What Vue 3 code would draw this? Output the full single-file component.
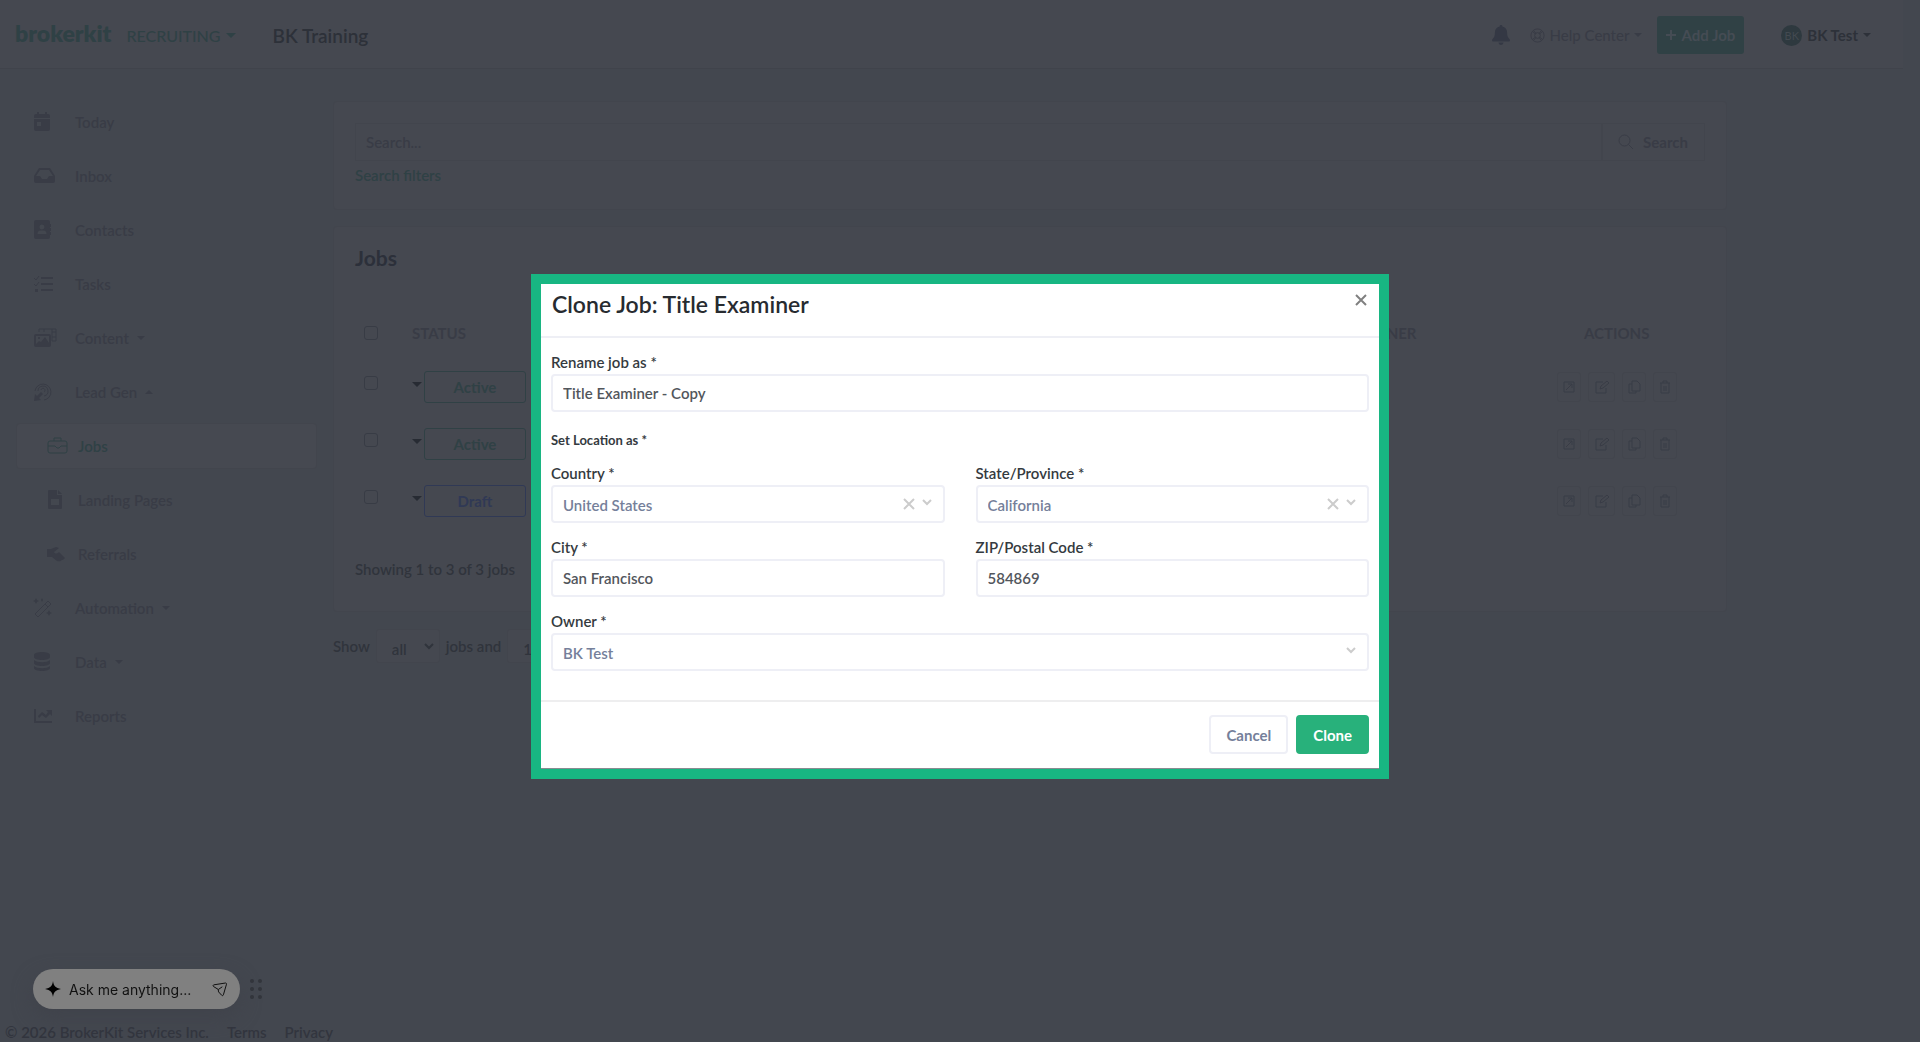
<template>
  <div class="page">
    <header class="topbar">
      <a class="brand" href="#">brokerkit</a>
      <button class="product" type="button">RECRUITING <i class="caret big"></i></button>
      <span class="workspace">BK Training</span>
      <div class="top-actions">
        <button class="bell" type="button" aria-label="Notifications">
          <svg width="18" height="20" viewBox="0 0 18 20">
            <path d="M9 0a1.300 1.300 0 0 0-1.300 1.500C4.800 2.100 2.900 4.400 2.900 7.500c0 3.800-1 5.200-2.500 6.800-.8.900-.2 2.200.9 2.200h15.400c1.100 0 1.700-1.300.9-2.200-1.500-1.600-2.500-3-2.500-6.800 0-3.100-1.900-5.400-4.800-6A1.300 1.300 0 0 0 9 0zM6.500 17.500a2.500 2.500 0 0 0 5 0z" />
          </svg>
        </button>
        <button class="help" type="button">
          <svg width="15" height="15" viewBox="0 0 15 15">
            <circle cx="7.500" cy="7.500" r="6.600" />
            <circle cx="7.500" cy="7.500" r="2.900" />
            <path d="M2.500 3.500l3 2.500M3.500 2.500l2.500 3M12.500 3.500l-3 2.500M11.500 2.500L9 5.500M2.500 11.500l3-2.500M3.500 12.500l2.500-3M12.500 11.500l-3-2.500M11.500 12.500L9 9.500" />
          </svg>
          Help Center <i class="caret"></i>
        </button>
        <button class="add-job" type="button">
          <svg width="12" height="12" viewBox="0 0 12 12"><path d="M6 1v10M1 6h10" /></svg>
          Add Job
        </button>
        <button class="account" type="button">
          <span class="avatar">BK</span>
          BK Test <i class="caret"></i>
        </button>
      </div>
    </header>

    <div class="body">
      <nav class="sidebar">
        <a
          v-for="item in navItems"
          :key="item.label"
          href="#"
          class="nav-item"
          :class="{ sub: item.sub, active: item.active }"
        >
          <svg class="nav-icon" width="24" height="20" viewBox="0 0 24 20">
            <path v-if="item.fill" class="fill" fill-rule="evenodd" :d="item.fill" />
            <path v-if="item.line" class="line" :d="item.line" />
          </svg>
          <span>{{ item.label }}</span>
          <i v-if="item.caret" class="caret" :class="item.caret"></i>
        </a>
      </nav>

      <main class="content">
        <section class="card search-card">
          <div class="search-row">
            <input v-model="search" type="text" placeholder="Search..." aria-label="Search jobs">
            <button type="button">
              <svg width="16" height="16" viewBox="0 0 16 16"><circle cx="6.500" cy="6.500" r="5.500" /><path d="M10.500 10.500L15 15" /></svg>
              Search
            </button>
          </div>
          <a class="filters" href="#">Search filters</a>
        </section>

        <section class="card jobs-card">
          <h2>Jobs</h2>
          <table>
            <thead>
              <tr>
                <th class="check"><input type="checkbox" aria-label="Select all jobs"></th>
                <th class="status">Status</th>
                <th class="owner">Owner</th>
                <th class="actions">Actions</th>
              </tr>
            </thead>
            <tbody>
              <tr v-for="job in jobs" :key="job.id">
                <td class="check"><input type="checkbox" :aria-label="'Select job ' + job.id"></td>
                <td class="status">
                  <button class="status-btn" :class="job.status.toLowerCase()" type="button">
                    <i class="caret"></i><span>{{ job.status }}</span>
                  </button>
                </td>
                <td class="owner"></td>
                <td class="actions">
                  <div class="action-row">
                    <button v-for="a in actions" :key="a.name" type="button" :aria-label="a.name" :class="a.name">
                      <svg width="14" height="14" viewBox="0 0 14 14"><path :d="a.d" /></svg>
                    </button>
                  </div>
                </td>
              </tr>
            </tbody>
          </table>
          <p class="showing">Showing 1 to 3 of 3 jobs</p>
        </section>

        <div class="pager">
          <label for="show-jobs">Show</label>
          <span class="mini-select">
            <select id="show-jobs"><option>all</option></select>
            <svg width="10" height="7" viewBox="0 0 10 7"><path d="M1 1l4 4 4-4" /></svg>
          </span>
          <label for="per-page">jobs and</label>
          <span class="mini-select">
            <select id="per-page"><option>10</option></select>
          </span>
        </div>
      </main>
    </div>

    <footer class="legal">
      <span>© 2026 BrokerKit Services Inc.</span>
      <a href="#">Terms</a>
      <a href="#">Privacy</a>
    </footer>

    <div class="assistant">
      <div class="ask">
        <svg width="16" height="16" viewBox="0 0 16 16" class="spark"><path d="M8 0c.7 4.800 2.500 7 8 8-5.500 1-7.300 3.200-8 8-.7-4.800-2.500-7-8-8 5.500-1 7.300-3.200 8-8z" /></svg>
        <input type="text" placeholder="Ask me anything..." aria-label="Ask me anything">
        <button type="button" aria-label="Send">
          <svg width="16" height="15" viewBox="0 0 16 15"><path d="M2 2.800L13.500 1c.7-.1 1.200.5 1 1.200l-3.100 10.600c-.2.900-1.200 1.100-1.800.4L6.600 9.900 6.200 7.400 1.500 4.500c-.8-.6-.5-1.500.5-1.700zM6.300 7.500l4-2.700" /></svg>
        </button>
      </div>
      <svg class="grip" width="12" height="20" viewBox="0 0 12 20">
        <circle v-for="n in 6" :key="n" :cx="n % 2 ? 2 : 10" :cy="2 + 8 * Math.floor((n - 1) / 2)" r="2" />
      </svg>
    </div>

    <div class="modal-layer">
      <form class="modal" role="dialog" aria-labelledby="clone-title" @submit.prevent>
        <div class="modal-head">
          <h1 id="clone-title">Clone Job: Title Examiner</h1>
          <button type="button" class="close" aria-label="Close">
            <svg width="12" height="12" viewBox="0 0 12 12"><path d="M1 1l10 10M11 1L1 11" /></svg>
          </button>
        </div>

        <div class="modal-body">
          <div class="field wide">
            <label for="job-name">Rename job as *</label>
            <input id="job-name" v-model="form.name" type="text">
          </div>
          <h3>Set Location as *</h3>
          <div v-for="f in fields" :key="f.key" class="field" :class="{ wide: f.wide }">
            <label :for="f.key">{{ f.label }}</label>
            <div v-if="f.select" class="picker">
              <select :id="f.key" v-model="form[f.key]"><option>{{ form[f.key] }}</option></select>
              <button v-if="f.clearable" type="button" class="clear" :aria-label="'Clear ' + f.key">
                <svg width="12" height="12" viewBox="0 0 12 12"><path d="M1 1l10 10M11 1L1 11" /></svg>
              </button>
              <svg class="chevron" width="10" height="7" viewBox="0 0 10 7"><path d="M1 1l4 4 4-4" /></svg>
            </div>
            <input v-else :id="f.key" v-model="form[f.key]" type="text">
          </div>
        </div>

        <div class="modal-foot">
          <button type="button" class="btn">Cancel</button>
          <button type="submit" class="btn primary">Clone</button>
        </div>
      </form>
    </div>
  </div>
</template>

<script setup>
import { reactive, ref } from 'vue'

const search = ref('')

const form = reactive({
  name: 'Title Examiner - Copy',
  country: 'United States',
  state: 'California',
  city: 'San Francisco',
  zip: '584869',
  owner: 'BK Test'
})

const fields = [
  { key: 'country', label: 'Country *', select: true, clearable: true },
  { key: 'state', label: 'State/Province *', select: true, clearable: true },
  { key: 'city', label: 'City *' },
  { key: 'zip', label: 'ZIP/Postal Code *' },
  { key: 'owner', label: 'Owner *', select: true, wide: true }
]

const navItems = [
  {
    label: 'Today',
    fill: 'M4 0h2v2h6V0h2v2h1a2 2 0 0 1 2 2v2H1V4a2 2 0 0 1 2-2h1zM1 7h16v10a2 2 0 0 1-2 2H3a2 2 0 0 1-2-2zM4 10v4h4v-4z'
  },
  {
    label: 'Inbox',
    fill: 'M6 2h11l5 8v5a2 2 0 0 1-2 2H3a2 2 0 0 1-2-2v-5zM7 4l-4 6h4l2 3h5l2-3h4l-4-6z'
  },
  {
    label: 'Contacts',
    fill: 'M3 0h12a2 2 0 0 1 2 2v2h1v3h-1v1h1v3h-1v1h1v3h-1v2a2 2 0 0 1-2 2H3a2 2 0 0 1-2-2V2a2 2 0 0 1 2-2zM9 4.500a2.500 2.500 0 1 0 0 5 2.500 2.500 0 0 0 0-5zM7.500 10.500C5.500 10.500 4.500 12 4.500 14h9c0-2-1-3.500-3-3.500z'
  },
  {
    label: 'Tasks',
    fill: 'M8 3h12v2H8zM8 9h12v2H8zM8 15h12v2H8zM2 15h3v3H2z',
    line: 'M1 4l2 2 3-4M1 10l2 2 3-4'
  },
  {
    label: 'Content',
    caret: 'down',
    fill: 'M3 6h13a2 2 0 0 1 2 2v9a2 2 0 0 1-2 2H3a2 2 0 0 1-2-2V8a2 2 0 0 1 2-2zM3 8v8l3-3 2 1 4-5 4 6V8zM5 9h2v2H5z',
    line: 'M6 4V1h17v12h-4M11 1v3M19 4h4M19 9h4M19 1v12'
  },
  {
    label: 'Lead Gen',
    caret: 'up',
    fill: 'M1 19l1-7 2 2 4-4 2 2-4 4 2 2z',
    line: 'M2 9a8 8 0 1 1 9 9M5 9a5 5 0 1 1 6 5M8 8a2 2 0 1 1 3 2'
  },
  {
    label: 'Jobs',
    sub: true,
    active: true,
    line: 'M3 5h15a2 2 0 0 1 2 2v8a2 2 0 0 1-2 2H3a2 2 0 0 1-2-2V7a2 2 0 0 1 2-2zM7 5V2h7v3M1 10h7l2 2h2l2-2h6'
  },
  {
    label: 'Landing Pages',
    sub: true,
    fill: 'M2 0h8v5h5v13a1 1 0 0 1-1 1H2a1 1 0 0 1-1-1V1a1 1 0 0 1 1-1zM11 0l4 4h-4zM4 9v6h8V9z'
  },
  {
    label: 'Referrals',
    sub: true,
    fill: 'M0 5h4l5-2 3 1-5 4c1 2 3 2 5 0l6 6c-1 1-2 2-3 2-2 2-4 1-5 1l-5-4H0z'
  },
  {
    label: 'Automation',
    caret: 'down',
    fill: 'M3 0l1 2 2 1-2 1-1 2-1-2-2-1 2-1zM16 12l1 2 2 1-2 1-1 2-1-2-2-1 2-1zM9 0l1 2-1 2-1-2z',
    line: 'M2 16L15 3l3 3L5 19zM12 6l3 3'
  },
  {
    label: 'Data',
    caret: 'down',
    fill: 'M1 3c0-4 16-4 16 0v2c0 4-16 4-16 0zM1 8c3 3 13 3 16 0v3c0 4-16 4-16 0zM1 14c3 3 13 3 16 0v2c0 4-16 4-16 0z'
  },
  {
    label: 'Reports',
    fill: 'M1 3h2v12h16v2H1zM13 4h6v6l-2-2-4 4-4-3-3 3-1-2 4-4 4 3 2-3z'
  }
]

const jobs = [
  { id: 1, status: 'Active' },
  { id: 2, status: 'Active' },
  { id: 3, status: 'Draft' }
]

const actions = [
  { name: 'open', d: 'M2 2h10v10H2zM4 10l6-6M6 4h4v4' },
  { name: 'edit', d: 'M8 2H1v11h10V8M5 9l1-3 6-5 2 2-6 5z' },
  { name: 'copy', d: 'M5 1h5l3 3v7H5zM5 4H2v9h7v-2' },
  { name: 'delete', d: 'M2 3h10M5 3V1h4v2M3 3v10h8V3M6 6v5M8 6v5' }
]
</script>

<style>
body {
  margin: 0;
  background: #43474f;
}
</style>

<style scoped>
.page {
  --line: #42454d;
  --surface: #454850;
  --muted: #393c46;
  --green: #2f4145;
  position: relative;
  display: flex;
  flex-direction: column;
  min-height: 100vh;
  box-sizing: border-box;
  font-family: Lato, "Open Sans", sans-serif;
  font-size: 15px;
  font-weight: 600;
  color: var(--muted);
  background: #43474f;
}

.page *,
.page *::before {
  box-sizing: border-box;
}

button,
input,
select {
  font: inherit;
  color: inherit;
}

button {
  padding: 0;
  border: 0;
  background: none;
  white-space: nowrap;
}

a {
  color: inherit;
  text-decoration: none;
}

svg {
  flex: none;
  fill: none;
  stroke: currentColor;
}

.caret {
  display: inline-block;
  flex: none;
  border: 4px solid transparent;
  border-top-color: currentColor;
  border-bottom: 0;
}

.caret.up {
  border-top: 0;
  border-bottom: 4px solid currentColor;
}

.caret.big {
  border-width: 5px 5px 0;
}

/* top bar */
.topbar {
  display: flex;
  align-items: center;
  height: 69px;
  margin-right: 17px;
  padding: 2px 32px 0 15px;
  background: var(--surface);
  border-bottom: 1px solid #40434b;
}

.brand {
  padding-bottom: 4px;
  font-size: 23px;
  line-height: 30px;
  font-weight: 800;
  color: var(--green);
}

.product {
  display: flex;
  align-items: center;
  gap: 5px;
  margin-left: 15px;
  font-size: 16px;
  font-weight: 500;
  color: var(--green);
}

.workspace {
  margin-left: 37px;
  font-size: 19px;
  color: #2d3139;
}

.top-actions {
  display: flex;
  align-items: center;
  margin-left: auto;
}

.bell svg {
  display: block;
  fill: currentColor;
  stroke: none;
}

.bell {
  color: #343844;
}

.account {
  color: #2d3139;
}

.help,
.account {
  display: flex;
  align-items: center;
  gap: 5px;
}

.help {
  margin: 0 15px 0 20px;
  font-weight: 500;
}

.add-job {
  display: flex;
  align-items: center;
  gap: 4px;
  height: 38px;
  padding: 0 9px 0 8px;
  border-radius: 3px;
  background: #304145;
  color: #454c54;
  font-weight: 700;
}

.add-job svg {
  stroke-width: 2;
}

.account {
  margin-left: 37px;
  font-weight: 700;
}

.avatar {
  width: 21px;
  height: 21px;
  border-radius: 50%;
  background: #2e393f;
  color: #434a51;
  font-size: 11px;
  line-height: 21px;
  font-weight: 400;
  text-align: center;
}

/* sidebar */
.body {
  display: flex;
  margin-right: 17px;
}

.sidebar {
  flex: none;
  width: 333px;
  padding: 30px 16px 0;
}

.nav-item {
  display: flex;
  align-items: center;
  height: 46px;
  margin-bottom: 8px;
  padding-left: 16px;
  border: 1px solid transparent;
  border-radius: 4px;
}

.nav-icon {
  margin-right: 18px;
}

.nav-icon .fill {
  fill: currentColor;
  stroke: none;
}

.nav-item .caret {
  margin-left: 8px;
}

.nav-item.sub {
  padding-left: 30px;
}

.nav-item.sub .nav-icon {
  margin-right: 7px;
}

.nav-item.active {
  border-color: var(--line);
  background: #464951;
  color: var(--green);
}

/* main column */
.content {
  flex: 1;
  min-width: 0;
  padding: 32px 176px 0 0;
}

.card {
  border: 1px solid var(--line);
  border-radius: 4px;
  background: var(--surface);
  padding: 21px;
}

.search-card {
  height: 109px;
  margin-bottom: 16px;
}

.search-row {
  display: flex;
  height: 38px;
  border: 1px solid var(--line);
}

.search-row input {
  flex: 1;
  min-width: 0;
  padding: 0 10px;
  border: 0;
  background: none;
}

.search-row input::placeholder {
  color: inherit;
  opacity: 1;
}

.search-row button {
  display: flex;
  align-items: center;
  gap: 9px;
  padding: 0 16px 0 15px;
  border-left: 2px solid var(--line);
  font-weight: 700;
}

.filters {
  display: block;
  margin-top: 4px;
  line-height: 20px;
  color: var(--green);
}

.jobs-card {
  height: 386px;
}

.jobs-card h2 {
  margin: 0;
  font-size: 21px;
  line-height: 20px;
  font-weight: 700;
  color: #2c303a;
}

table {
  width: 100%;
  margin-top: 40px;
  border-collapse: collapse;
  table-layout: fixed;
}

th {
  height: 50px;
  padding: 0;
  font-size: 15px;
  font-weight: 700;
  text-align: left;
  text-transform: uppercase;
}

td {
  height: 57px;
  padding: 0;
}

.check {
  width: 57px;
  padding-left: 9px;
}

.check input {
  appearance: none;
  display: block;
  width: 14px;
  height: 14px;
  margin: 0;
  border: 1px solid #383c45;
  border-radius: 3px;
}

td.check input {
  margin-bottom: 8px;
}

th.status {
  width: 947px;
}

.status-btn {
  display: flex;
  align-items: center;
  gap: 2px;
}

.status-btn .caret {
  margin-bottom: 4px;
  border-width: 5px 5px 0;
  color: #272b33;
}

.status-btn span {
  width: 102px;
  height: 32px;
  border: 1px solid currentColor;
  border-radius: 3px;
  line-height: 30px;
  font-weight: 700;
}

.status-btn.active {
  color: #304145;
}

.status-btn.draft {
  color: #303955;
}

th.actions {
  width: 148px;
  padding-left: 27px;
}

.action-row {
  display: flex;
  gap: 7px;
}

.action-row button {
  display: flex;
  align-items: center;
  justify-content: center;
  width: 24px;
  height: 30px;
  border: 1px solid var(--line);
  border-radius: 3px;
}

.action-row .edit {
  width: 27px;
}

.showing {
  margin: 30px 0 0;
  line-height: 20px;
  color: #30343c;
}

.pager {
  display: flex;
  align-items: center;
  gap: 6px;
  margin-top: 17px;
  color: #30343c;
}

.mini-select {
  position: relative;
}

.mini-select select {
  appearance: none;
  display: block;
  width: 64px;
  height: 34px;
  padding: 5px 15px 0;
  border: 1px solid var(--line);
  border-radius: 3px;
  background: var(--surface);
}

.mini-select svg {
  position: absolute;
  top: 14px;
  right: 6px;
  stroke-width: 2;
}

/* footer and assistant */
.legal {
  display: flex;
  gap: 18px;
  margin-top: auto;
  padding: 0 5px;
  line-height: 20px;
  color: #32353e;
}

.assistant {
  position: fixed;
  left: 33px;
  bottom: 33px;
  display: flex;
  align-items: center;
  gap: 10px;
  font-family: Inter, sans-serif;
  font-weight: 400;
}

.ask {
  display: flex;
  align-items: center;
  width: 207px;
  height: 40px;
  padding: 0 12px;
  border-radius: 20px;
  background: #808080;
  box-shadow: 0 8px 20px #40434b;
  color: #111;
}

.ask .spark {
  fill: #000;
  stroke: none;
}

.ask input {
  flex: 1;
  min-width: 0;
  padding: 0 8px;
  border: 0;
  background: none;
  font-size: 14px;
}

.ask input::placeholder {
  color: #111;
  opacity: 1;
}

.ask button svg {
  display: block;
}

.grip {
  fill: #32353b;
  stroke: none;
}

/* modal */
.modal-layer {
  position: fixed;
  inset: 0;
  display: flex;
  align-items: flex-start;
  justify-content: center;
  padding-top: 274px;
}

.modal {
  width: 858px;
  border: 10px solid #18b682;
  background: #fff;
  color: #343a40;
}

.modal-head {
  display: flex;
  justify-content: space-between;
  align-items: flex-start;
  height: 54px;
  padding: 5px 12px 0 11px;
  border-bottom: 2px solid #eeeff5;
}

.modal-head h1 {
  margin: 0;
  font-size: 23px;
  line-height: 30px;
  font-weight: 600;
  color: #272b30;
}

.close {
  margin-top: 5px;
  color: #808080;
}

.close svg {
  display: block;
  stroke-width: 2;
}

.modal-body {
  display: grid;
  grid-template-columns: 1fr 1fr;
  column-gap: 31px;
  row-gap: 16px;
  padding: 16px 10px 29px;
}

.field label {
  display: block;
  margin-bottom: 4px;
  line-height: 16px;
}

.field input,
.picker select {
  display: block;
  width: 100%;
  height: 38px;
  padding: 0 10px;
  border: 2px solid #eeeff6;
  border-radius: 4px;
  background: #fff;
  color: #52565c;
}

.wide {
  grid-column: 1 / -1;
}

.modal-body h3 {
  grid-column: 1 / -1;
  margin: 4px 0 1px;
  font-size: 13px;
  line-height: 16px;
  font-weight: 700;
}

.picker {
  position: relative;
}

.picker select {
  appearance: none;
  padding: 2px 10px 0;
  color: #75809a;
}

.picker .clear {
  position: absolute;
  top: 13px;
  right: 30px;
  color: #ccc;
}

.picker svg {
  display: block;
  stroke-width: 2;
}

.picker .chevron {
  position: absolute;
  top: 14px;
  right: 13px;
  color: #ccc;
}

.modal-foot {
  display: flex;
  justify-content: flex-end;
  gap: 8px;
  padding: 13px 10px 14px;
  border-top: 2px solid #eeeeef;
  border-bottom: 1px solid #888b91;
}

.btn {
  height: 39px;
  padding: 0 15px;
  border: 2px solid #eeeff6;
  border-radius: 4px;
  font-weight: 700;
  color: #75809a;
}

.btn.primary {
  border-color: #28b17b;
  background: #28b17b;
  color: #fff;
}
</style>
